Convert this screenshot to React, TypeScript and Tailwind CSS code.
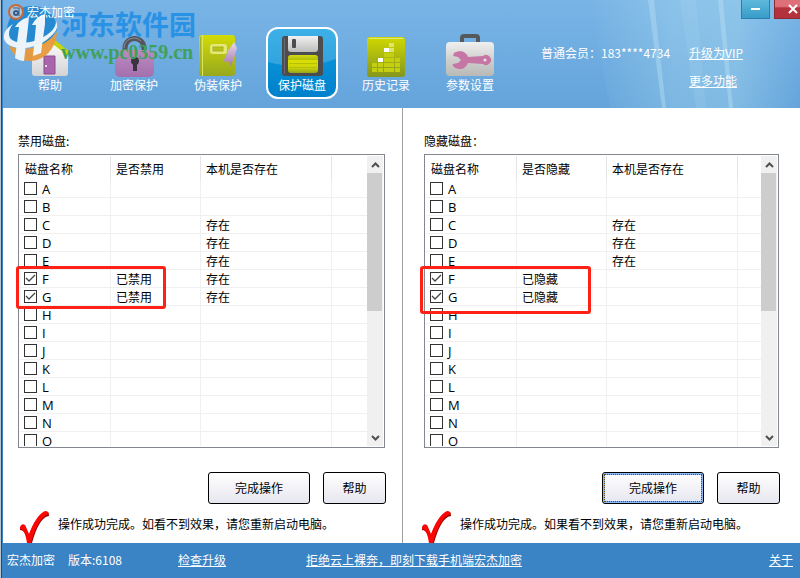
import { useState } from 'react';
import type { ReactNode } from 'react';

const LETTERS = ['A', 'B', 'C', 'D', 'E', 'F', 'G', 'H', 'I', 'J', 'K', 'L', 'M', 'N', 'O'];

function HomeIcon() {
  return (
    <svg viewBox="0 0 48 48" className="relative w-12 h-12">
      <defs>
        <linearGradient id="wall" x1="0" y1="0" x2="0" y2="1">
          <stop offset="0" stopColor="#ffffff" />
          <stop offset="1" stopColor="#d3d3d6" />
        </linearGradient>
      </defs>
      <path d="M6 20 24 8l18 14v20a3 3 0 0 1-3 3H9a3 3 0 0 1-3-3z" fill="url(#wall)" />
      <path d="M3 20 24 5l20 16-3 3L24 11 6 23z" fill="#c3d40c" />
      <path d="M18 25h11v18H18z" fill="#a865ab" stroke="#8a4d90" />
      <circle cx="20" cy="35" r="1" fill="#fff" />
    </svg>
  );
}

function LockIcon() {
  return (
    <svg viewBox="0 0 48 48" className="relative w-12 h-12">
      <defs>
        <linearGradient id="lock" x1="0" y1="0" x2="0" y2="1">
          <stop offset="0" stopColor="#b98cc0" />
          <stop offset="1" stopColor="#a56fae" />
        </linearGradient>
      </defs>
      <path d="M15 21v-4a9.5 9.5 0 0 1 19 0v4" fill="none" stroke="#55565c" strokeWidth="5" />
      <path d="M14 17a10 10 0 0 1 17-7" fill="none" stroke="#8b8d93" strokeWidth="1" />
      <rect x="5" y="19" width="39" height="27" rx="5" fill="url(#lock)" />
      <circle cx="25" cy="30" r="4" fill="#3b333f" />
      <path d="M23 32h4v8h-4z" fill="#3b333f" />
    </svg>
  );
}

function BookIcon() {
  return (
    <svg viewBox="0 0 48 48" className="relative w-12 h-12">
      <defs>
        <linearGradient id="cover" x1="0" y1="0" x2="0" y2="1">
          <stop offset="0" stopColor="#d2db06" />
          <stop offset="1" stopColor="#97a81f" />
        </linearGradient>
        <linearGradient id="ribbon" x1="0" y1="0" x2="0" y2="1">
          <stop offset="0" stopColor="#e6d8ea" />
          <stop offset="1" stopColor="#a577b4" />
        </linearGradient>
      </defs>
      <rect x="5" y="4" width="36" height="41" rx="3" fill="url(#cover)" />
      <path d="M6.5 6v37" stroke="#a5b31c" strokeWidth="1" />
      <path d="M8.5 4v41" stroke="#dde45e" strokeWidth="1" />
      <rect x="16" y="13" width="17" height="10" rx="3" fill="#e4e878" />
      <rect x="19" y="16" width="10" height="4" fill="#b9c21b" stroke="#a7b119" />
      <path d="m40 11-6 9-5 11 5-1 3 5 4-11 2-7z" fill="url(#ribbon)" />
    </svg>
  );
}

function FloppyIcon() {
  return (
    <svg viewBox="0 0 48 48" className="relative w-12 h-12">
      <defs>
        <linearGradient id="shutter" x1="0" y1="0" x2="0" y2="1">
          <stop offset="0" stopColor="#f1f1f1" />
          <stop offset="1" stopColor="#bdbdbb" />
        </linearGradient>
        <linearGradient id="label" x1="0" y1="0" x2="0" y2="1">
          <stop offset="0" stopColor="#d4dc10" />
          <stop offset="0.25" stopColor="#b3bd0c" />
          <stop offset="0.3" stopColor="#d9e000" />
          <stop offset="0.7" stopColor="#cdd508" />
          <stop offset="1" stopColor="#96a61c" />
        </linearGradient>
      </defs>
      <rect x="4" y="5" width="41" height="40" rx="3" fill="#4d4d4f" />
      <path d="M10 5h30v13a3 3 0 0 1-3 3H13a3 3 0 0 1-3-3z" fill="url(#shutter)" />
      <rect x="14" y="8" width="4" height="9" rx="1" fill="#4d4d4f" />
      <rect x="10" y="24" width="30" height="18" rx="3" fill="url(#label)" />
      <path d="M11 28.5h28M11 32.5h28M11 36.5h28" stroke="#b7c10d" strokeWidth="1" />
      <path d="M6.5 7v36" stroke="#6b6b6d" strokeWidth="1" />
    </svg>
  );
}

function HistoryIcon() {
  // lit cells of the equalizer, counted from the bottom row
  const heights = [2, 3, 5, 6, 3];
  return (
    <svg viewBox="0 0 48 48" className="relative w-12 h-12">
      <defs>
        <linearGradient id="panel" x1="0" y1="0" x2="0" y2="1">
          <stop offset="0" stopColor="#cfd800" />
          <stop offset="1" stopColor="#85961f" />
        </linearGradient>
      </defs>
      <rect x="5" y="6" width="38" height="40" rx="3" fill="url(#panel)" />
      <path d="M7 7.5h34" stroke="#e3ea7c" strokeWidth="1" />
      {heights.map((h, col) =>
        Array.from({ length: h }, (_, row) => (
          <rect
            key={`${col}-${row}`}
            x={10 + col * 6 - (col > 2 ? 1 : 0)}
            y={37 - row * 5}
            width="5"
            height="4"
            fill={
              (col === 1 && row === 2) || (col === 2 && row === 4)
                ? '#ffffff'
                : row > 3
                  ? '#dfe56a'
                  : '#c4cf12'
            }
          />
        ))
      )}
    </svg>
  );
}

function ToolboxIcon() {
  return (
    <svg viewBox="0 0 48 48" className="relative w-12 h-12">
      <defs>
        <linearGradient id="case" x1="0" y1="0" x2="0" y2="1">
          <stop offset="0" stopColor="#f0f0f0" />
          <stop offset="0.5" stopColor="#d0d1cf" />
          <stop offset="1" stopColor="#b9bab8" />
        </linearGradient>
      </defs>
      <path d="M16 13V7a2 2 0 0 1 2-2h12a2 2 0 0 1 2 2v6" fill="none" stroke="#55585d" strokeWidth="4" />
      <rect x="0" y="11" width="48" height="34" rx="4" fill="url(#case)" />
      <path
        d="M8 22c5-3 12-2 14 4l15-1a5 5 0 1 1 0 8l-15-1c-2 6-9 8-14 4-1-1-2-2-1-3l5-1 3-3-3-3-5-1z"
        fill="#c676a4"
      />
      <circle cx="39" cy="29" r="1.5" fill="#e6e6e6" />
    </svg>
  );
}

function AppLogo() {
  return (
    <svg viewBox="0 0 16 16" className="w-4 h-4">
      <circle cx="8" cy="8" r="7" fill="#a9c8e0" stroke="#c8683c" strokeWidth="2" />
      <circle cx="8" cy="9" r="2" fill="none" stroke="#3b5c86" strokeWidth="2" />
      <path d="M5 4h6v8" fill="none" stroke="#3b5c86" strokeWidth="1" />
    </svg>
  );
}

function Watermark() {
  return (
    <div className="pointer-events-none absolute -left-px top-1 flex items-start gap-[3px]">
      <svg viewBox="0 4 56 58" className="h-[58px] w-14 opacity-95">
        {/* globe */}
        <path d="M5 31C5 16 16 6 30 6c14 0 25 10 25 24L44 46H11z" fill="#2188d0" />
        <path d="M7 46c17 7 36 1 48-14-1 17-13 29-27 29-9 0-17-5-21-15z" fill="#e9993c" />
        {/* ring */}
        <path d="M11 24C4 28 1 34 2 39c4 12 30 13 46-2 6-5 9-10 6-16 0 6-4 11-11 15-12 8-30 9-35 2-2-4-1-9 3-14z" fill="#f3f7fb" />
        {/* strokes */}
        <path d="M27 17c-5 1-10 4-14 10h4l-4 31c3 2 6 3 9 3l4-34zM43 14c-6 2-10 5-13 11h4l-3 31 8-3 4-29z" fill="#f3f7fb" />
      </svg>
      <div className="pt-1">
        <div className="text-[27px] leading-8 font-bold text-[#2a92e4]">河东软件园</div>
        <div className="font-['Liberation_Serif',serif] text-xl leading-6 font-bold text-[#3fa05a]">www.pc0359.cn</div>
      </div>
    </div>
  );
}

function LightBeams() {
  return (
    <svg viewBox="0 0 270 108" className="pointer-events-none absolute right-0 top-0 h-[108px] w-[270px]">
      <defs>
        <linearGradient id="beam" x1="0" y1="0" x2="1" y2="0">
          <stop offset="0" stopColor="#b5e4f2" stopOpacity="0" />
          <stop offset="0.4" stopColor="#b5e4f2" stopOpacity="0.3" />
          <stop offset="0.7" stopColor="#b5e4f2" stopOpacity="0.35" />
          <stop offset="1" stopColor="#b5e4f2" stopOpacity="0" />
        </linearGradient>
      </defs>
      <path d="M60 0h210v108H80z" fill="url(#beam)" />
      <path d="M118 0h6l12 108h-4z" fill="#c5e8f5" fillOpacity="0.35" />
      <path d="M188 0h5l10 108h-4z" fill="#c5e8f5" fillOpacity="0.35" />
      <path d="M150 0h16l10 108h-10z" fill="#c5e8f5" fillOpacity="0.12" />
    </svg>
  );
}

const NAV: { label: string; icon: ReactNode }[] = [
  { label: '帮助', icon: <HomeIcon /> },
  { label: '加密保护', icon: <LockIcon /> },
  { label: '伪装保护', icon: <BookIcon /> },
  { label: '保护磁盘', icon: <FloppyIcon /> },
  { label: '历史记录', icon: <HistoryIcon /> },
  { label: '参数设置', icon: <ToolboxIcon /> },
];

function Header() {
  const [active, setActive] = useState('保护磁盘');

  return (
    <header className="relative h-[108px] overflow-hidden bg-linear-to-b from-[#79b4e6] to-[#64a4db] text-white">
      <LightBeams />
      {/* Title bar */}
      <div className="relative z-10 flex h-[27px] items-start pl-[5px]">
        <div className="flex items-center gap-[3px] pt-1">
          <AppLogo />
          <span className="leading-4">宏杰加密</span>
        </div>
        <div className="ml-auto flex gap-1">
          <button
            aria-label="最小化"
            className="flex h-[19px] w-[29px] items-center justify-center border border-t-0 border-[#2b7fae] bg-linear-to-b from-[#5fb9dc] to-[#379cc8]"
          >
            <svg viewBox="0 0 10 10" className="w-2.5 h-2.5"><path d="M0 5h9" stroke="#fff" strokeWidth="2" /></svg>
          </button>
          <button
            aria-label="关闭"
            className="flex h-[19px] w-[26px] items-center justify-end border border-t-0 border-r-0 border-[#8c2a30] bg-linear-to-b from-[#dd7079] from-35% to-[#b4323c] to-45% pr-0.5"
          >
            <svg viewBox="0 0 10 10" className="w-2.5 h-2.5"><path d="m1 1 8 8M9 1 1 9" stroke="#fff" strokeWidth="2" /></svg>
          </button>
        </div>
      </div>

      {/* Toolbar */}
      <div className="relative flex items-start pl-[11px]">
        <nav className="flex gap-3">
          {NAV.map(item => (
            <button
              key={item.label}
              onClick={() => setActive(item.label)}
              className={`relative flex h-[72px] w-[72px] flex-col items-center overflow-hidden rounded-xl border-2 pt-0.5 ${
                active === item.label
                  ? 'border-white bg-linear-to-b from-[#12a0e2] to-[#0080cb]'
                  : 'border-transparent'
              }`}
            >
              {active === item.label && (
                <svg viewBox="0 0 68 68" className="absolute inset-0 h-[68px] w-[68px]">
                  <path d="M0 0h68v30Q34 42 0 33z" fill="#ffffff" fillOpacity="0.18" />
                </svg>
              )}
              {item.icon}
              <span className="relative leading-3">{item.label}</span>
            </button>
          ))}
        </nav>
        <div className="ml-[35px] grid grid-cols-[148px_auto] gap-y-2.5 pt-[17px] leading-[18px]">
          <span>普通会员：183****4734</span>
          <a href="#vip" className="underline">升级为VIP</a>
          <a href="#more" className="col-start-2 underline">更多功能</a>
        </div>
      </div>
      <Watermark />
    </header>
  );
}

interface DiskPanelProps {
  title: string;
  stateHeader: string;
  stateText: string;
  existing: string[];
  message: string;
  focused?: boolean;
  className: string;
  highlight: string;
}

function DiskPanel({ title, stateHeader, stateText, existing, message, focused, className, highlight }: DiskPanelProps) {
  const [checked, setChecked] = useState<string[]>(['F', 'G']);

  function toggle(letter: string) {
    setChecked(prev => (prev.includes(letter) ? prev.filter(l => l !== letter) : [...prev, letter]));
  }

  const button =
    'h-8 rounded-[3px] border border-black bg-linear-to-b from-white to-[#e6e6ef] text-black';

  return (
    <section className={`pt-6 ${className}`}>
      <h2 className="mb-1 leading-[18px]">{title}</h2>

      <div className="relative mr-px">
        <div className="flex h-[294px] overflow-hidden border border-[#828790] p-px">
          <div className="flex-1 overflow-hidden">
            <table className="w-full table-fixed border-separate border-spacing-0 text-left">
              <colgroup>
                <col className="w-[91px]" />
                <col className="w-[90px]" />
                <col className="w-[131px]" />
                <col />
              </colgroup>
              <thead>
                <tr className="h-6">
                  <th className="border-r border-[#e5e5e5] p-0 pt-0.5 pl-[5px] font-normal">磁盘名称</th>
                  <th className="border-r border-[#e5e5e5] p-0 pt-0.5 pl-[5px] font-normal">{stateHeader}</th>
                  <th className="border-r border-[#e5e5e5] p-0 pt-0.5 pl-[5px] font-normal">本机是否存在</th>
                  <th className="p-0"></th>
                </tr>
              </thead>
              <tbody className="leading-4">
                {LETTERS.map(letter => (
                  <tr key={letter} className="h-[18px]">
                    <td className="border-r border-b border-[#f0f0f0] p-0 pl-1">
                      <label className="flex items-center gap-[5px]">
                        <span className="relative block h-[13px] w-[13px]">
                          <input
                            type="checkbox"
                            checked={checked.includes(letter)}
                            onChange={() => toggle(letter)}
                            className="peer block h-[13px] w-[13px] appearance-none border border-[#333333] bg-white"
                          />
                          <svg
                            viewBox="0 0 13 13"
                            className="pointer-events-none absolute inset-0 hidden h-[13px] w-[13px] peer-checked:block"
                          >
                            <path d="m2 6 3 3 6-6" fill="none" stroke="#444" strokeWidth="1.3" />
                          </svg>
                        </span>
                        <span className="pt-px font-['Open_Sans','Noto_Sans',sans-serif] text-[13px] leading-4">{letter}</span>
                      </label>
                    </td>
                    <td className="border-r border-b border-[#f0f0f0] p-0 pt-px pl-[5px]">
                      {checked.includes(letter) ? stateText : ''}
                    </td>
                    <td className="border-r border-b border-[#f0f0f0] p-0 pt-px pl-[5px]">
                      {existing.includes(letter) ? '存在' : ''}
                    </td>
                    <td className="border-b border-[#f0f0f0] p-0"></td>
                  </tr>
                ))}
              </tbody>
            </table>
          </div>
          {/* Scrollbar */}
          <div className="flex w-4 flex-col bg-[#f0f0f0]">
            <button aria-label="向上滚动" className="flex h-[17px] items-center justify-center">
              <svg viewBox="0 0 9 6" className="h-1.5 w-[9px]"><path d="m1 5 3.5-3.5L8 5" fill="none" stroke="#505050" strokeWidth="2" /></svg>
            </button>
            <div className="mr-px h-[138px] bg-[#cdcdcd]" />
            <button aria-label="向下滚动" className="mt-auto flex h-[17px] items-center justify-center">
              <svg viewBox="0 0 9 6" className="h-1.5 w-[9px]"><path d="m1 1 3.5 3.5L8 1" fill="none" stroke="#505050" strokeWidth="2" /></svg>
            </button>
          </div>
        </div>
        {/* Marked rows */}
        <div className={`pointer-events-none absolute top-28 rounded-[3px] border-3 border-[#ff2116] ${highlight}`} />
      </div>

      <div className="mt-6 flex justify-end gap-[13px]">
        <button
          className={`w-[102px] ${button} ${
            focused ? 'outline-1 -outline-offset-3 outline-dotted outline-[#6b4a10] ring-2 ring-inset ring-[#8db9f0]' : ''
          }`}
        >
          完成操作
        </button>
        <button className={`w-[63px] ${button}`}>帮助</button>
      </div>

      <div className={`flex items-start gap-2 ${focused ? '-ml-1' : ''}`}>
        <svg viewBox="0 0 32 32" className="mt-[7px] h-8 w-8">
          <path d="M2 18c2-4 5-3 6 0l3 6C15 14 20 4 27 1c2-1 4 1 4 4-8 1-13 13-17 27h-4C9 26 7 19 2 19z" fill="#8c0000" />
          <path d="M2 16c2-4 5-3 6 0l3 7C15 13 20 3 27 0c2 0 4 1 4 3-8 2-14 14-18 29H9C8 25 6 18 2 18z" fill="#fb0505" />
        </svg>
        <p className="mt-[11px] leading-[18px]">{message}</p>
      </div>
    </section>
  );
}

function Footer() {
  return (
    <footer className="flex h-[35px] items-center bg-[#3a83c4] pr-[7px] pb-0.5 pl-1 text-white">
      <span>宏杰加密</span>
      <span className="ml-[13px]">版本:6108</span>
      <a href="#update" className="ml-14 underline">检查升级</a>
      <a href="#mobile" className="ml-20 underline">拒绝云上裸奔，即刻下载手机端宏杰加密</a>
      <a href="#about" className="ml-auto underline">关于</a>
    </footer>
  );
}

export default function App() {
  return (
    <div className="border-l border-[#b9c4cf] bg-white font-['Noto_Sans_CJK_SC',sans-serif] text-xs text-black">
      <div className="border-l border-[#33475c]">
        <div className="border-l border-[#3a83c4]">
          <Header />
          <main className="grid grid-cols-[400fr_397fr]">
            <DiskPanel
              title="禁用磁盘:"
              stateHeader="是否禁用"
              stateText="已禁用"
              existing={['C', 'D', 'E', 'F', 'G']}
              message="操作成功完成。如看不到效果，请您重新启动电脑。"
              className="border-r border-[#a0a0a0] pr-4 pl-[15px]"
              highlight="-left-0.5 h-[43px] w-[150px]"
            />
            <DiskPanel
              title="隐藏磁盘："
              stateHeader="是否隐藏"
              stateText="已隐藏"
              existing={['C', 'D', 'E']}
              message="操作成功完成。如果看不到效果，请您重新启动电脑。"
              focused
              className="pr-5 pl-[21px]"
              highlight="-left-1 h-12 w-[171px]"
            />
          </main>
          <Footer />
        </div>
      </div>
    </div>
  );
}
